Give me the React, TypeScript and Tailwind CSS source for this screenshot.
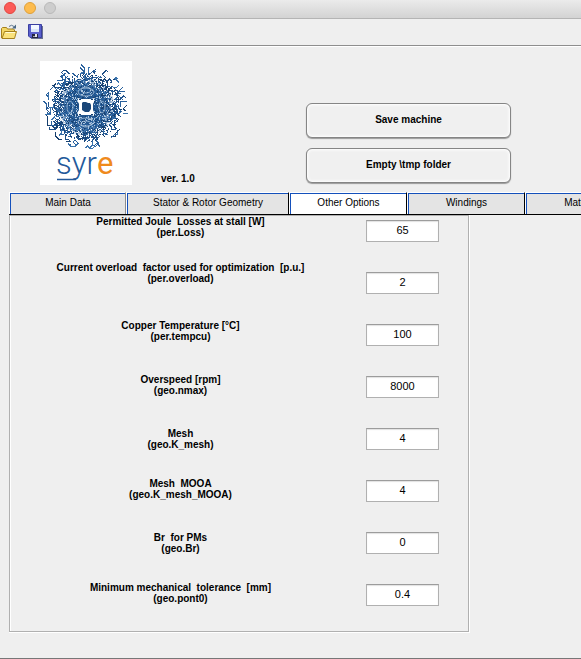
import React, { useState } from "react";

type Field = { id: string; title: string; name: string; value: string; space: string };

const fields: Field[] = [
  { id: "loss", title: "Permitted Joule  Losses at stall [W]", name: "(per.Loss)", value: "65", space: "" },
  { id: "overload", title: "Current overload  factor used for optimization  [p.u.]", name: "(per.overload)", value: "2", space: "mt-6" },
  { id: "tempcu", title: "Copper Temperature [°C]", name: "(per.tempcu)", value: "100", space: "mt-9" },
  { id: "nmax", title: "Overspeed [rpm]", name: "(geo.nmax)", value: "8000", space: "mt-8" },
  { id: "kmesh", title: "Mesh", name: "(geo.K_mesh)", value: "4", space: "mt-8" },
  { id: "kmeshmooa", title: "Mesh  MOOA", name: "(geo.K_mesh_MOOA)", value: "4", space: "mt-7" },
  { id: "br", title: "Br  for PMs", name: "(geo.Br)", value: "0", space: "mt-8" },
  { id: "pont0", title: "Minimum mechanical  tolerance  [mm]", name: "(geo.pont0)", value: "0.4", space: "mt-7" },
];

const tabs = [
  { label: "Main Data", width: "w-[117px]", edge: "border-r-[#8c8c8c]" },
  { label: "Stator & Rotor Geometry", width: "w-[163px]", edge: "border-r-black" },
  { label: "Other Options", width: "w-[118px]", edge: "border-r-black" },
  { label: "Windings", width: "w-[118px]", edge: "border-r-black" },
  { label: "Materials", width: "w-[118px]", edge: "border-r-black" },
];

// Seeded generator, so that the emblem is the same on every render.
function makeRandom(seed: number) {
  let s = seed;
  return () => {
    s = (s * 1664525 + 1013904223) % 4294967296;
    return s / 4294967296;
  };
}

const palette = ["#17406f", "#1f5088", "#2a619d", "#3a73ad"];

function buildEmblem() {
  const rnd = makeRandom(41);
  const strokes: { d: string; c: string }[] = [];
  const dots: { x: number; y: number; c: string }[] = [];
  for (let i = 0; i < 190; i++) {
    const a = rnd() * Math.PI * 2;
    const r = 22 + rnd() * 19;
    let x = 46 + Math.cos(a) * r;
    let y = 46 + Math.sin(a) * r;
    let d = `M${x.toFixed(1)} ${y.toFixed(1)}`;
    let dir = Math.floor(rnd() * 8) * (Math.PI / 4);
    for (let k = 0; k < 3; k++) {
      const len = 2 + rnd() * 4;
      x += Math.cos(dir) * len;
      y += Math.sin(dir) * len;
      if (Math.hypot(x - 46, y - 46) > 43) break;
      d += `L${x.toFixed(1)} ${y.toFixed(1)}`;
      dir += rnd() > 0.5 ? Math.PI / 2 : -Math.PI / 4;
    }
    strokes.push({ d, c: palette[Math.floor(rnd() * 4)] });
  }
  for (let i = 0; i < 2100; i++) {
    const a = rnd() * Math.PI * 2;
    const r = 8 + Math.pow(rnd(), 0.8) * 26;
    const white = rnd() < 0.3;
    dots.push({
      x: Math.round(46 + Math.cos(a) * r),
      y: Math.round(46 + Math.sin(a) * r),
      c: white ? (r < 22 ? "#a9c3dd" : "#ffffff") : palette[Math.floor(rnd() * 3)],
    });
  }
  return { strokes, dots };
}

const emblem = buildEmblem();

function Logo() {
  return (
    <svg width="92" height="124" viewBox="0 0 92 124" className="shrink-0 bg-white" role="img" aria-label="syre">
      <defs>
        <radialGradient id="core">
          <stop offset="0" stopColor="#1c4c82" />
          <stop offset="0.7" stopColor="#2a619d" />
          <stop offset="1" stopColor="#2a619d" stopOpacity="0.15" />
        </radialGradient>
      </defs>
      <circle cx="46" cy="46" r="29" fill="url(#core)" />
      <g fill="none" strokeWidth="1" shapeRendering="crispEdges">
        {emblem.strokes.map((s, i) => (
          <path key={i} d={s.d} stroke={s.c} />
        ))}
      </g>
      <g shapeRendering="crispEdges">
        {emblem.dots.map((p, i) => (
          <rect key={i} x={p.x} y={p.y} width="1" height="1" fill={p.c} />
        ))}
      </g>
      <g fill="none" stroke="#b9cfe4" strokeWidth="1" opacity="0.75">
        <ellipse cx="46" cy="29" rx="5" ry="3" />
        <ellipse cx="46" cy="31" rx="8" ry="4" />
        <ellipse cx="46" cy="63" rx="5" ry="3" />
        <ellipse cx="46" cy="61" rx="8" ry="4" />
        <ellipse cx="30" cy="46" rx="3" ry="6" />
        <ellipse cx="62" cy="46" rx="3" ry="6" />
      </g>
      <path d="M38 37l3 1h10l3-1v4l-1 2v6l1 2v4l-3-1H41l-3 1v-4l1-2v-6l-1-2z" fill="#fff" />
      <path d="M39 38h2v1h-2zM51 38h2v1h-2zM39 53h2v1h-2zM51 53h2v1h-2z" fill="#17406f" />
      <path d="M42 42l1-1h3l2 1h2l1 2v4l-2 3h-4l-3-2v-3z" fill="#1a4678" />
      <text x="16" y="113" fontSize="31" fontWeight="300" fontFamily="Roboto, 'Liberation Sans', sans-serif" fill="#23599a">
        syr<tspan fill="#ef8a1c" fontWeight="400">e</tspan>
      </text>
      <path d="M17 118.500H36" stroke="#23599a" strokeWidth="1.500" />
    </svg>
  );
}

function FolderIcon() {
  return (
    <svg width="16" height="16" viewBox="0 0 16 16" aria-hidden="true">
      <path d="M.5 14V4.500l1-1h4l1 1.500h6l1 1v3" fill="#f3d766" stroke="#a5801c" />
      <path d="M1 14.500L3.500 7.500h12L13.500 14.500z" fill="#fae27c" stroke="#a5801c" />
      <path d="M4.500 8.500h9.500" stroke="#fffbd8" />
      <path d="M8 2.500q2.500-2.500 5 0" fill="none" stroke="#5d7790" />
      <path d="M15 .5v4h-4z" fill="#4a6783" />
    </svg>
  );
}

function DiskIcon() {
  return (
    <svg width="16" height="16" viewBox="0 0 16 16" aria-hidden="true">
      <path d="M2 2h13v13H3z" fill="#69718f" />
      <path d="M.5.500h13v13H2l-1.500-1.500z" fill="#5a60cc" stroke="#3a3fa0" />
      <path d="M3 1h8v7H3z" fill="#f3f8ff" />
      <path d="M3 5h8v3H3z" fill="#dbe6f8" />
      <path d="M4 10h6v4H4z" fill="#23263f" />
      <path d="M7 10h2v3H7z" fill="#e4e6ea" />
      <path d="M5 12h2v1H5z" fill="#9fa5bb" />
    </svg>
  );
}

function PushButton({ children }: { children: React.ReactNode }) {
  return (
    <button
      type="button"
      className="h-[35px] w-full rounded-md border border-[#858585] bg-[#f0f0f0] pb-[2px] text-[10px] leading-[11px] font-bold shadow-[inset_0_0_3px_1px_#ffffff,0_1px_1px_#9a9a9a]"
    >
      {children}
    </button>
  );
}

export default function App() {
  const [active, setActive] = useState("Other Options");
  const [values, setValues] = useState<Record<string, string>>(
    Object.fromEntries(fields.map((f) => [f.id, f.value]))
  );

  return (
    <div className="flex min-h-screen flex-col overflow-hidden border-b border-[#777777] bg-[#efefef] font-['Liberation_Sans',Arial,sans-serif] text-[10px] leading-[11px] text-black">
      <div className="flex h-[19px] items-start gap-2 border-b border-[#b4b4b4] bg-linear-to-b from-[#ebebeb] to-[#d3d3d3] px-1 pt-[2px]">
        <button type="button" aria-label="Close" className="size-3 rounded-full border border-[#e2463f] bg-[#fc5b57]" />
        <button type="button" aria-label="Minimize" className="size-3 rounded-full border border-[#dfa03a] bg-[#fdbc4e]" />
        <button type="button" aria-label="Zoom" className="size-3 rounded-full border border-[#b9b9b9] bg-[#cdcdcd]" />
      </div>

      <div className="flex h-[27px] items-center gap-[11px] border-b border-[#8e8e8e] px-px">
        <button type="button" aria-label="Open"><FolderIcon /></button>
        <button type="button" aria-label="Save"><DiskIcon /></button>
      </div>

      <header className="flex items-end border-t border-white pt-[14px] pb-[7px] pl-10">
        <Logo />
        <p className="ml-[29px] w-[145px] pb-px font-bold">ver. 1.0</p>
        <div className="mb-[2px] flex w-[205px] flex-col gap-[10px]">
          <PushButton>Save machine</PushButton>
          <PushButton>Empty \tmp folder</PushButton>
        </div>
      </header>

      <div role="tablist" className="ml-[9px] flex border-b border-black">
        {tabs.map((t) => (
          <button
            key={t.label}
            type="button"
            role="tab"
            aria-selected={active === t.label}
            onClick={() => setActive(t.label)}
            className={`${t.width} ${t.edge} h-[22px] shrink-0 border-t border-r border-l border-t-white border-l-white ${
              active === t.label ? "bg-white" : "bg-[#e4e4e4]"
            }`}
          >
            <span className="flex h-full items-center justify-center border-t border-l border-[#1450bb] pb-[3px]">{t.label}</span>
          </button>
        ))}
      </div>

      <main className="mr-4 ml-[9px] max-w-[461px] border-r border-b border-white">
        <div className="border border-[#b0b0b0]">
          <form className="grid grid-cols-[1fr_73px] gap-4 border-l border-white pr-[29px] pb-[25px]">
            <div className="flex flex-col items-center text-center font-bold">
              {fields.map((f) => (
                <label key={f.id} htmlFor={f.id} className={`${f.space} whitespace-pre`}>
                  <span className="block">{f.title}</span>
                  <span className="block">{f.name}</span>
                </label>
              ))}
            </div>
            <div className="flex flex-col gap-[30px] pt-1">
              {fields.map((f) => (
                <input
                  key={f.id}
                  id={f.id}
                  type="text"
                  value={values[f.id]}
                  onChange={(e) => setValues({ ...values, [f.id]: e.target.value })}
                  className="h-[22px] w-full border border-[#b0b0b0] border-t-[#9c9c9c] bg-white pb-[2px] text-center text-[11px] leading-3 shadow-[inset_0_1px_1px_#e2e2e2] outline-none"
                />
              ))}
            </div>
          </form>
        </div>
      </main>
    </div>
  );
}
